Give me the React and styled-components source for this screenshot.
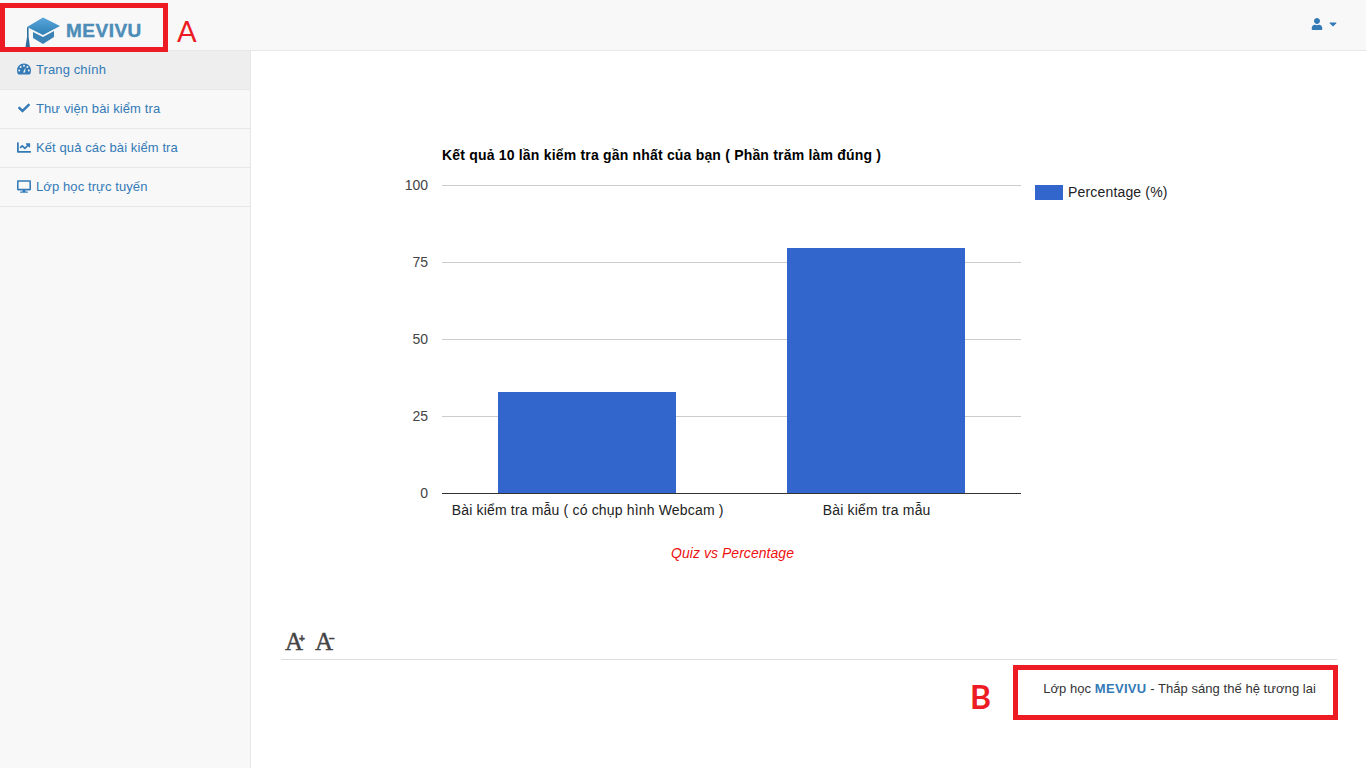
import React from 'react'
import styled, { createGlobalStyle } from 'styled-components'
import { FaCheck, FaChartLine, FaDesktop, FaUser, FaCaretDown } from 'react-icons/fa'

const GlobalStyle = createGlobalStyle`
    html, body {
        margin: 0;
        padding: 0;
        background: #fff;
        font-family: "Liberation Sans", Arial, sans-serif;
        font-size: 14px;
        color: #333;
    }
    * { box-sizing: border-box; }
`

function GaugeIcon() {
    return (
        <svg width="14" height="12" viewBox="0 0 14 12">
            <path d="M7 0.5 C3 0.5 0 3.6 0 7.4 C0 8.9 0.4 10.2 1.2 11.5 L12.8 11.5 C13.6 10.2 14 8.9 14 7.4 C14 3.6 11 0.5 7 0.5 Z" fill="currentColor" />
            <g fill="#eee">
                <circle cx="2.2" cy="7.4" r="1" />
                <circle cx="3.6" cy="4" r="1" />
                <circle cx="7" cy="2.7" r="1" />
                <circle cx="10.4" cy="4" r="1" />
                <circle cx="11.8" cy="7.4" r="1" />
            </g>
            <path d="M6 9.5 L8.4 4.4 L8.2 9.5 Z" fill="#eee" />
        </svg>
    )
}

const menu = [
    { label: 'Trang chính', icon: <GaugeIcon />, size: 14, active: true },
    { label: 'Thư viện bài kiểm tra', icon: <FaCheck />, size: 12 },
    { label: 'Kết quả các bài kiểm tra', icon: <FaChartLine />, size: 15 },
    { label: 'Lớp học trực tuyến', icon: <FaDesktop />, size: 15 },
]

const ticks = [
    { value: 100, y: 185 },
    { value: 75, y: 262 },
    { value: 50, y: 339 },
    { value: 25, y: 416 },
]

const bars = [
    { x: 498, y: 392, label: 'Bài kiểm tra mẫu ( có chụp hình Webcam )' },
    { x: 787, y: 248, label: 'Bài kiểm tra mẫu' },
]

function Logo() {
    return (
        <LogoBox>
            <svg width="36" height="31" viewBox="0 0 36 31">
                <defs>
                    <linearGradient id="capTop" x1="0" y1="0" x2="0" y2="1">
                        <stop offset="0" stopColor="#58a6dc" />
                        <stop offset="1" stopColor="#2f7fb5" />
                    </linearGradient>
                </defs>
                <path d="M18 0.5 L35 9 L18 18 L2 10 Z" fill="url(#capTop)" />
                <path d="M8 15 L18 20 L29 14 L29 20 L18 27 L8 21 Z" fill="#3b83b5" />
                <path d="M2 10 L3.6 11 L3.6 20 L5 30 L0.5 30 L2 20 Z" fill="#2d6f9f" />
            </svg>
            <LogoText>MEVIVU</LogoText>
        </LogoBox>
    )
}

function Chart() {
    return (
        <ChartSvg viewBox="281 0 1056 520">
            <ChartTitle x="442" y="109">Kết quả 10 lần kiểm tra gần nhất của bạn ( Phần trăm làm đúng )</ChartTitle>
            {ticks.map(t => (
                <g key={t.value}>
                    <line x1="442" x2="1021" y1={t.y - 50.5} y2={t.y - 50.5} stroke="#ccc" />
                    <AxisText x="428" y={t.y - 46} textAnchor="end">{t.value}</AxisText>
                </g>
            ))}
            <AxisText x="428" y="447" textAnchor="end">0</AxisText>
            {bars.map(b => (
                <g key={b.x}>
                    <rect x={b.x} y={b.y - 51} width="178" height={493 - b.y} fill="#3366cc" />
                    <BarLabel x={b.x + 89.7} y="464" textAnchor="middle">{b.label}</BarLabel>
                </g>
            ))}
            <line x1="442" x2="1021" y1="442.5" y2="442.5" stroke="#333" />
            <rect x="1035" y="134" width="28" height="15" fill="#3366cc" />
            <BarLabel x="1068" y="146">Percentage (%)</BarLabel>
            <AxisCaption x="732.5" y="507" textAnchor="middle">Quiz vs Percentage</AxisCaption>
        </ChartSvg>
    )
}

export default function App() {
    return (
        <>
            <GlobalStyle />
            <Page>
                <Navbar>
                    <Logo />
                    <UserMenu><FaUser /><FaCaretDown /></UserMenu>
                </Navbar>
                <Body>
                    <Sidebar>
                        {menu.map(item => (
                            <MenuItem key={item.label} $active={item.active}>
                                <MenuIcon $size={item.size}>{item.icon}</MenuIcon>
                                {item.label}
                            </MenuItem>
                        ))}
                    </Sidebar>
                    <Main>
                        <Chart />
                        <FontTools>
                            <FontButton>A<sup>+</sup></FontButton>
                            <FontButton>A<sup>−</sup></FontButton>
                        </FontTools>
                        <Footer>
                            Lớp học <strong>MEVIVU</strong> - Thắp sáng thế hệ tương lai
                        </Footer>
                    </Main>
                </Body>
                <MarkBox $left={0} $top={3} $width={168} $height={49} />
                <MarkLetter $left={177} $top={13} $size={29}>A</MarkLetter>
                <MarkBox $left={1013} $top={665} $width={325} $height={55} />
                <MarkLetter $left={970} $top={679} $size={32} $bold>B</MarkLetter>
            </Page>
        </>
    )
}

const Page = styled.div`
    position: relative;
    width: 1366px;
    height: 768px;
    overflow: hidden;
`

const Navbar = styled.header`
    height: 51px;
    background: #f8f8f8;
    border-bottom: 1px solid #e7e7e7;
    display: flex;
    align-items: center;
    justify-content: space-between;
    padding: 0 27px 0 25px;
`

const LogoBox = styled.div`
    display: flex;
    align-items: flex-start;
    gap: 5px;
    height: 50px;
    padding-top: 17px;
`

const LogoText = styled.span`
    font-family: "Liberation Sans", Arial, sans-serif;
    font-weight: 700;
    font-size: 19px;
    letter-spacing: 0.5px;
    line-height: 14px;
    color: #4d8db8;
    -webkit-text-stroke: 0.4px #4d8db8;
    margin-top: 7px;
`

const UserMenu = styled.div`
    display: flex;
    align-items: center;
    gap: 4px;
    color: #337ab7;
    font-size: 12px;
    margin-bottom: 2px;
`

const Body = styled.div`
    display: flex;
    height: 717px;
`

const Sidebar = styled.nav`
    width: 251px;
    background: #f8f8f8;
    border-right: 1px solid #e7e7e7;
`

const MenuItem = styled.a`
    display: flex;
    align-items: center;
    height: 39px;
    padding-left: 17px;
    padding-bottom: 2px;
    font-size: 13px;
    letter-spacing: 0.1px;
    color: #337ab7;
    background: ${p => (p.$active ? '#eeeeee' : 'transparent')};
    border-bottom: 1px solid #e7e7e7;
`

const MenuIcon = styled.span`
    display: flex;
    justify-content: center;
    width: 14px;
    margin-right: 5px;
    font-size: ${p => p.$size}px;
`

const Main = styled.main`
    flex: 1;
    padding: 0 29px 0 30px;
`

const ChartSvg = styled.svg`
    display: block;
    width: 1056px;
    height: 520px;
    margin-bottom: 50px;
    font-family: "Liberation Sans", Arial, sans-serif;
`

const ChartTitle = styled.text`
    font-size: 14px;
    font-weight: 700;
    letter-spacing: 0.19px;
    fill: #000;
`

const AxisText = styled.text`
    font-size: 14px;
    fill: #444;
`

const BarLabel = styled.text`
    font-size: 14px;
    letter-spacing: 0.17px;
    fill: #222;
`

const AxisCaption = styled.text`
    font-size: 14px;
    font-style: italic;
    letter-spacing: 0.05px;
    fill: #ee1111;
`

const FontTools = styled.div`
    display: flex;
    height: 39px;
    padding: 9px 0 0 4px;
    border-bottom: 1px solid #ddd;
`

const FontButton = styled.span`
    width: 30px;
    font-family: "Liberation Serif", serif;
    font-size: 25px;
    letter-spacing: -4px;
    line-height: 24px;
    color: #444;
    -webkit-text-stroke: 0.4px #444;

    sup {
        font-family: "Liberation Sans", sans-serif;
        font-size: 10px;
        font-weight: 700;
        letter-spacing: 0;
        line-height: 0;
        vertical-align: 8px;
    }
`

const Footer = styled.div`
    text-align: right;
    padding: 21px 21px 0 0;
    font-size: 13px;
    letter-spacing: 0.05px;
    color: #333;

    strong {
        color: #337ab7;
        letter-spacing: 0.3px;
    }
`

const MarkBox = styled.div`
    position: absolute;
    left: ${p => p.$left}px;
    top: ${p => p.$top}px;
    width: ${p => p.$width}px;
    height: ${p => p.$height}px;
    border: 5px solid #ed1c24;
`

const MarkLetter = styled.span`
    position: absolute;
    left: ${p => p.$left}px;
    top: ${p => p.$top}px;
    font-family: Lato, sans-serif;
    font-size: ${p => p.$size}px;
    line-height: 36px;
    font-weight: ${p => (p.$bold ? 700 : 400)};
    color: #ed1c24;
`
